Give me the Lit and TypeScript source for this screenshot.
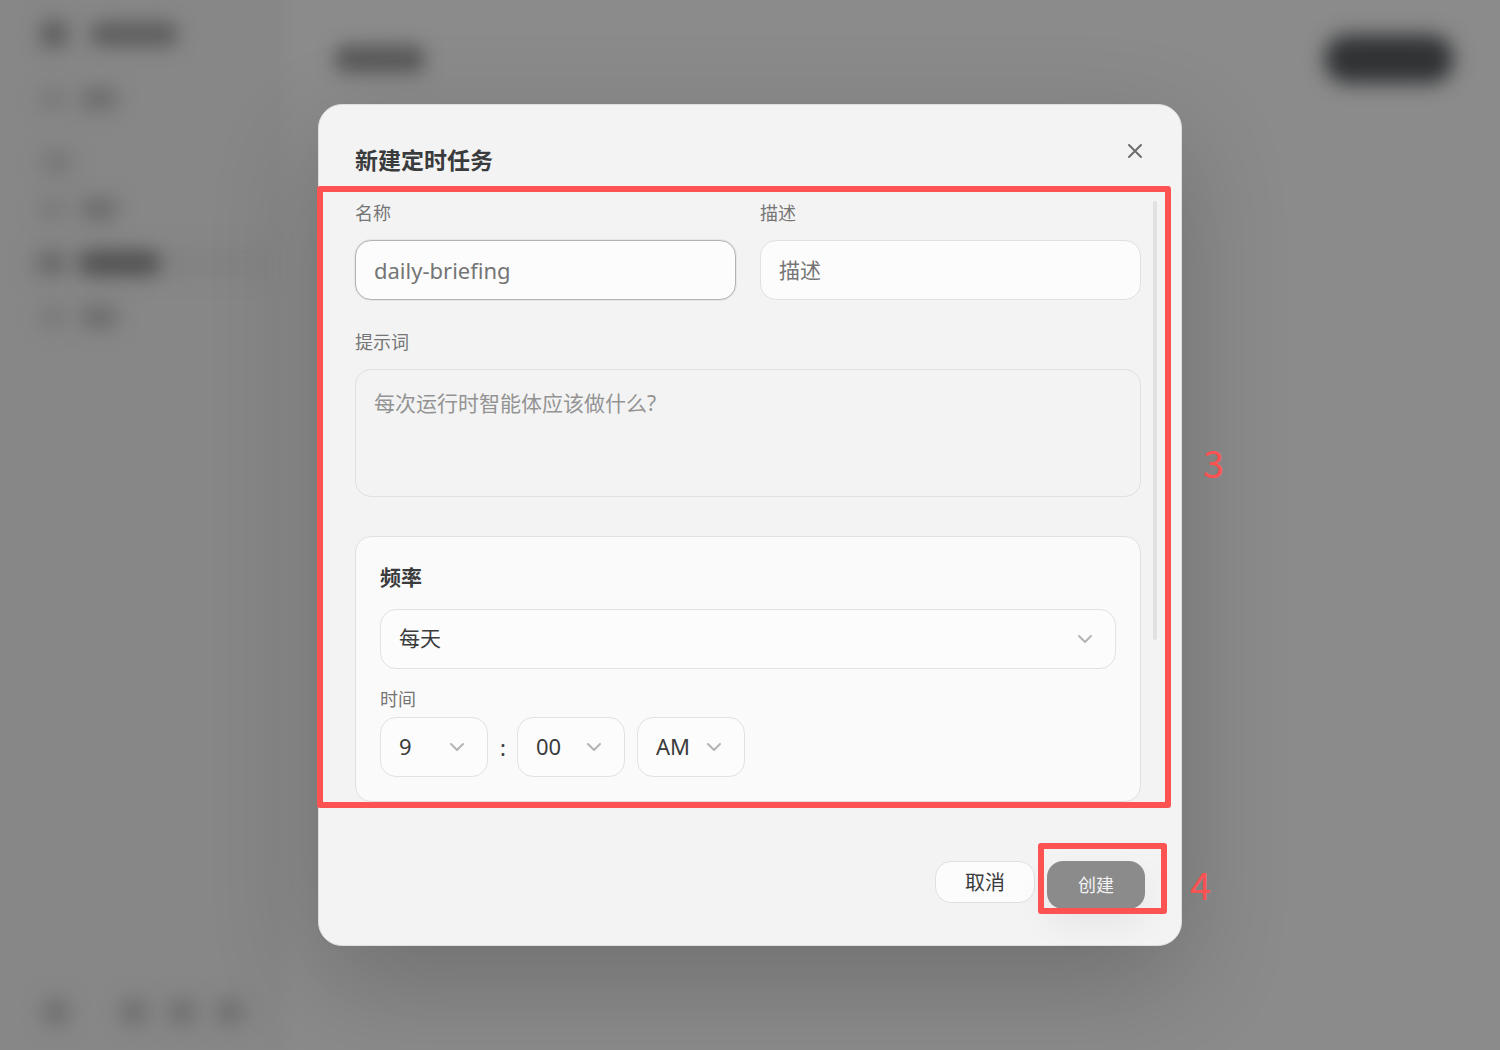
import { LitElement, html, css } from "lit";
import { customElement, property, state } from "lit/decorators.js";

const FONT = css`"Noto Sans", "Noto Sans CJK SC", sans-serif`;

@customElement("app-backdrop")
class AppBackdrop extends LitElement {
  static styles = css`
    :host {
      display: grid;
      grid-template-columns: 297px 1fr;
      min-height: 100vh;
      background: #8b8b8b;
    }
    .sidebar {
      display: flex;
      flex-direction: column;
      justify-content: space-between;
      padding: 18px 28px;
      background: linear-gradient(to right, #878787 92%, #8b8b8b);
      box-sizing: border-box;
    }
    .top,
    .row,
    .tools,
    .head {
      display: flex;
    }
    .top {
      flex-direction: column;
    }
    .row {
      align-items: center;
      gap: 16px;
      height: 54px;
      padding-left: 12px;
    }
    .brand {
      height: 32px;
      gap: 22px;
      margin-bottom: 22px;
    }
    .group {
      margin-top: 16px;
      height: 40px;
    }
    .row.current {
      background: linear-gradient(to right, #808080, #848484);
      background-size: 100% 36px;
      background-position: center;
      background-repeat: no-repeat;
      filter: blur(8px);
    }
    .blob {
      height: 22px;
      border-radius: 11px;
      background: #787878;
      filter: blur(10px);
    }
    .icon {
      width: 24px;
      background: #767676;
    }
    .word {
      width: 38px;
      background: #6b6b6b;
    }
    .logo {
      width: 28px;
      height: 28px;
      background: #5c5c5c;
    }
    .name {
      width: 88px;
      height: 26px;
      background: #606060;
      filter: blur(9px);
    }
    .section {
      width: 34px;
      background: #767676;
    }
    .strong {
      width: 80px;
      height: 26px;
      background: #545454;
      filter: blur(5px);
    }
    .dim {
      background: #646464;
      filter: blur(6px);
    }
    .tools {
      gap: 20px;
      padding: 0 0 6px 14px;
    }
    .dot {
      width: 28px;
      height: 28px;
      border-radius: 14px;
      background: #6e6e6e;
    }
    .dot:first-child {
      margin-right: 30px;
    }
    .head {
      justify-content: space-between;
      align-items: flex-start;
      padding: 35px 47px 0 38px;
    }
    .title {
      width: 90px;
      height: 28px;
      margin-top: 10px;
      background: #5a5a5a;
      filter: blur(9px);
    }
    .action {
      width: 128px;
      height: 48px;
      border-radius: 22px;
      background: #303234;
      filter: blur(10px);
    }
  `;

  render() {
    return html`
      <div class="sidebar">
        <div class="top">
          <div class="row brand"><i class="blob logo"></i><i class="blob name"></i></div>
          <div class="row"><i class="blob icon"></i><i class="blob word"></i></div>
          <div class="row group"><i class="blob section"></i></div>
          <div class="row"><i class="blob icon"></i><i class="blob word"></i></div>
          <div class="row current"><i class="blob icon dim"></i><i class="blob strong"></i></div>
          <div class="row"><i class="blob icon"></i><i class="blob word"></i></div>
        </div>
        <div class="tools">
          <i class="blob dot"></i><i class="blob dot"></i><i class="blob dot"></i><i class="blob dot"></i>
        </div>
      </div>
      <div class="head"><i class="blob title"></i><i class="blob action"></i></div>
    `;
  }
}

@customElement("app-select")
class AppSelect extends LitElement {
  @property() label = "";
  @property({ type: Array }) options: string[] = [];
  @property() value = "";

  static styles = css`
    :host {
      display: grid;
      align-items: center;
      font-size: 21px;
    }
    select,
    svg {
      grid-area: 1 / 1;
    }
    select {
      appearance: none;
      box-sizing: border-box;
      width: 100%;
      height: 60px;
      margin: 0;
      padding: 0 48px 2px 18px;
      border: 1px solid #e2e2e2;
      border-radius: 16px;
      background: #fcfcfc;
      color: #3a3b3d;
      font-family: ${FONT};
      font-size: inherit;
      line-height: 30px;
    }
    svg {
      justify-self: end;
      margin-right: 19px;
      pointer-events: none;
      fill: none;
      stroke: #b4b4b4;
      stroke-width: 2;
      stroke-linecap: round;
      stroke-linejoin: round;
    }
  `;

  render() {
    return html`
      <select
        aria-label=${this.label}
        @change=${(e: Event) => (this.value = (e.target as HTMLSelectElement).value)}
      >
        ${this.options.map((o) => html`<option ?selected=${o === this.value}>${o}</option>`)}
      </select>
      <svg width="24" height="24" viewBox="0 0 24 24" aria-hidden="true"><path d="M6 9l6 6 6-6" /></svg>
    `;
  }
}

@customElement("app-root")
class AppRoot extends LitElement {
  @state() private open = true;

  static styles = css`
    :host {
      display: grid;
      min-height: 100vh;
      overflow: hidden;
      font-family: ${FONT};
      color: #3a3b3d;
    }
    app-backdrop,
    .overlay {
      grid-area: 1 / 1;
    }
    .overlay {
      display: grid;
      place-items: center;
      z-index: 1;
    }
    .dialog {
      box-sizing: border-box;
      width: min(864px, 100%);
      border: 1px solid #dedede;
      border-radius: 24px;
      background: #f3f3f3;
      box-shadow: 0 36px 108px rgba(0, 0, 0, 0.2);
    }
    header {
      display: flex;
      justify-content: space-between;
      align-items: flex-start;
      box-sizing: border-box;
      height: 96px;
      padding: 28px 28px 0 36px;
    }
    h2 {
      margin: 11px 0 0;
      font-size: 23px;
      line-height: 32px;
      font-weight: 700;
    }
    .close {
      display: grid;
      place-items: center;
      width: 36px;
      height: 36px;
      padding: 0;
      border: 0;
      border-radius: 8px;
      background: none;
    }
    .close svg {
      fill: none;
      stroke: #6c6c6c;
      stroke-width: 2;
      stroke-linecap: round;
    }
    .body {
      position: relative;
      display: grid;
      grid-template-columns: 1fr 4px;
      gap: 12px;
      padding: 0 24px 0 36px;
    }
    .track {
      height: 73%;
      border-radius: 2px;
      background: #e1e1e1;
    }
    form {
      display: grid;
      grid-template-columns: 1fr 1fr;
      gap: 30px 24px;
    }
    .field {
      display: grid;
      gap: 14px;
    }
    .wide {
      grid-column: 1 / -1;
    }
    label,
    .caption {
      font-size: 18px;
      line-height: 25px;
      color: #757575;
    }
    input,
    textarea {
      box-sizing: border-box;
      width: 100%;
      margin: 0;
      border: 1px solid #e0e0e0;
      border-radius: 16px;
      font: 400 21px/32px ${FONT};
      color: #3a3b3d;
      outline: none;
    }
    input {
      height: 60px;
      padding: 0 18px;
      background: #fcfcfc;
    }
    input.active {
      border-color: #b3b3b3;
      box-shadow: 0 0 0 1px #e6e6e6;
      font-size: 22px;
    }
    input::placeholder {
      color: #757575;
      opacity: 1;
    }
    textarea {
      display: block;
      height: 128px;
      padding: 17px 18px;
      background: transparent;
      resize: none;
    }
    textarea::placeholder {
      color: #939393;
      opacity: 1;
    }
    .card {
      box-sizing: border-box;
      margin-top: 9px;
      padding: 24px;
      border: 1px solid #e0e0e0;
      border-radius: 16px;
      background: #fafafa;
    }
    h3 {
      margin: 0 0 16px;
      font-size: 21px;
      line-height: 32px;
      font-weight: 700;
    }
    .caption {
      margin: 18px 0 5px;
    }
    .time {
      display: flex;
      align-items: center;
      gap: 12px;
      font-size: 22px;
      line-height: 32px;
    }
    .time app-select {
      width: 108px;
      font-size: 22px;
    }
    .colon {
      width: 5px;
    }
    footer {
      position: relative;
      display: flex;
      justify-content: flex-end;
      align-items: flex-start;
      gap: 12px;
      padding: 59px 36px 36px;
    }
    .cancel,
    .create {
      box-sizing: border-box;
      padding: 0 0 2px;
      border-radius: 16px;
      font-family: inherit;
    }
    .cancel {
      width: 100px;
      height: 42px;
      border: 1px solid #e0e0e0;
      background: #fcfcfc;
      color: #3a3b3d;
      font-size: 20px;
    }
    .create {
      width: 98px;
      height: 48px;
      border: 0;
      background: #8b8b8b;
      color: #f3f3f3;
      font-size: 18px;
      box-shadow: 0 15px 36px rgba(0, 0, 0, 0.06);
    }
    .mark {
      position: absolute;
      box-sizing: border-box;
      border: 6px solid #fc5252;
      border-radius: 3px;
      pointer-events: none;
    }
    .mark-form {
      inset: -15px 10px -6px -2px;
    }
    .mark-create {
      top: 41px;
      right: 14px;
      width: 129px;
      height: 71px;
    }
    .step {
      position: absolute;
      color: #fc5252;
      font-family: "Noto Sans CJK SC", sans-serif;
      font-size: 38px;
      line-height: 38px;
    }
    .step-form {
      left: calc(100% + 22px);
      top: 242px;
    }
    .step-create {
      left: calc(100% + 9px);
      top: 63px;
    }
  `;

  render() {
    return html`
      <app-backdrop aria-hidden="true"></app-backdrop>
      ${this.open ? html`<div class="overlay">${this.dialog()}</div>` : ""}
    `;
  }

  private dialog() {
    const close = () => (this.open = false);
    return html`
      <section class="dialog" role="dialog" aria-modal="true" aria-labelledby="heading">
        <header>
          <h2 id="heading">新建定时任务</h2>
          <button class="close" type="button" aria-label="关闭" @click=${close}>
            <svg width="24" height="24" viewBox="0 0 24 24"><path d="M6 6l12 12M18 6L6 18" /></svg>
          </button>
        </header>
        <div class="body">
          <form id="task" @submit=${(e: Event) => e.preventDefault()}>
            <div class="field">
              <label for="name">名称</label>
              <input id="name" class="active" type="text" placeholder="daily-briefing" />
            </div>
            <div class="field">
              <label for="description">描述</label>
              <input id="description" type="text" placeholder="描述" />
            </div>
            <div class="field wide">
              <label for="prompt">提示词</label>
              <textarea id="prompt" placeholder="每次运行时智能体应该做什么?"></textarea>
            </div>
            <div class="card wide">
              <h3>频率</h3>
              <app-select label="频率" value="每天" .options=${["每天"]}></app-select>
              <div class="caption">时间</div>
              <div class="time">
                <app-select label="时" value="9" .options=${["9"]}></app-select>
                <span class="colon">:</span>
                <app-select label="分" value="00" .options=${["00"]}></app-select>
                <app-select label="AM / PM" value="AM" .options=${["AM", "PM"]}></app-select>
              </div>
            </div>
          </form>
          <div class="track"></div>
          <div class="mark mark-form"></div>
          <span class="step step-form">3</span>
        </div>
        <footer>
          <button class="cancel" type="button" @click=${close}>取消</button>
          <button class="create" type="submit" form="task">创建</button>
          <div class="mark mark-create"></div>
          <span class="step step-create">4</span>
        </footer>
      </section>
    `;
  }
}
